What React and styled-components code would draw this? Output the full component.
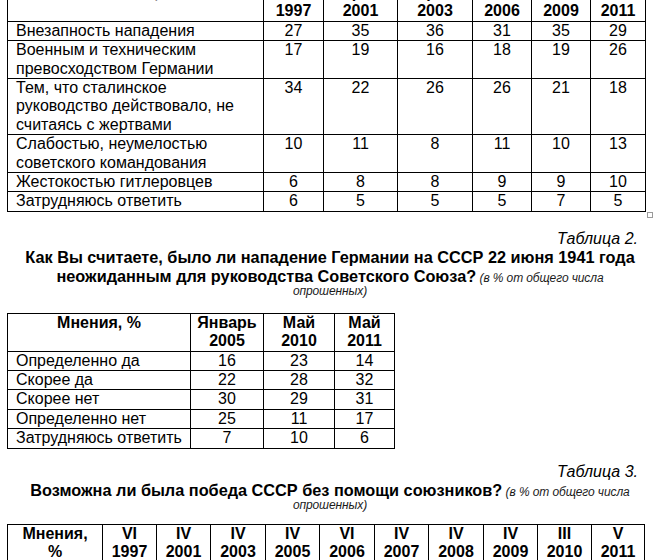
import React from 'react'
import styled, { createGlobalStyle } from 'styled-components'

const GlobalStyle = createGlobalStyle`
body {
  margin: 0;
  background: #fff;
  color: #000;
  font-family: "Liberation Sans", Arial, sans-serif;
  overflow: hidden;
}
`

const Page = styled.div`
padding: 0 6px 0 7px;
margin-top: -17px;
`

const TableWrap = styled.div`
position: relative;
width: fit-content;
margin-top: ${p => p.$gap || 0}px;
`

const Table = styled.table`
border-collapse: collapse;
table-layout: fixed;
width: ${p => p.$width}px;
font-size: 16px;
line-height: 18.4px;
`

const Col = styled.col`
width: ${p => p.$w}px;
`

const Th = styled.th`
border: 1px solid #000;
padding: 0 3px;
font-weight: bold;
text-align: center;
vertical-align: top;
white-space: pre-line;
`

const Td = styled.td`
border: 1px solid #000;
padding: ${p => (p.$label ? '0 2px 0 8px' : '0 3px')};
text-align: ${p => (p.$label ? 'left' : 'center')};
vertical-align: top;
`

// the little square Word draws at the table corner
const ResizeHandle = styled.span`
position: absolute;
right: -7px;
bottom: -6px;
width: 4px;
height: 4px;
border: 1px solid #9a9a9a;
background: #fff;
`

const Caption = styled.div`
margin-top: ${p => p.$gap}px;
padding-right: 15px;
text-align: right;
font-size: 16px;
line-height: 18.4px;
font-style: italic;
`

const Title = styled.div`
text-align: center;
font-size: 12px;
line-height: 12.6px;
`

const Question = styled.span`
font-size: 16.3px;
line-height: 18.4px;
font-weight: bold;
`

const Note = styled.span`
font-style: italic;
color: #1a1a1a;
letter-spacing: -0.1px;
`

const table1 = {
  cols: [256, 60, 74, 75, 59, 59, 55],
  head: ['Мнения, %', 'Июнь\n1997', 'Апрель\n2001', 'Апрель\n2003', 'Июнь\n2006', 'Июнь\n2009', 'Май\n2011'],
  rows: [
    ['Внезапность нападения', 27, 35, 36, 31, 35, 29],
    ['Военным и техническим превосходством Германии', 17, 19, 16, 18, 19, 26],
    ['Тем, что сталинское руководство действовало, не считаясь с жертвами', 34, 22, 26, 26, 21, 18],
    ['Слабостью, неумелостью советского командования', 10, 11, 8, 11, 10, 13],
    ['Жестокостью гитлеровцев', 6, 8, 8, 9, 9, 10],
    ['Затрудняюсь ответить', 6, 5, 5, 5, 7, 5],
  ],
}

const table2 = {
  cols: [183, 73, 71, 60],
  head: ['Мнения, %', 'Январь\n2005', 'Май\n2010', 'Май\n2011'],
  rows: [
    ['Определенно да', 16, 23, 14],
    ['Скорее да', 22, 28, 32],
    ['Скорее нет', 30, 29, 31],
    ['Определенно нет', 25, 11, 17],
    ['Затрудняюсь ответить', 7, 10, 6],
  ],
}

const table3 = {
  cols: [95, 54, 54, 55, 54, 55, 54, 55, 54, 54, 53],
  head: ['Мнения,\n%', 'VI\n1997', 'IV\n2001', 'IV\n2003', 'IV\n2005', 'VI\n2006', 'IV\n2007', 'IV\n2008', 'IV\n2009', 'III\n2010', 'V\n2011'],
  rows: [],
}

const DataTable = ({ data, gap, handle }) => {
  const width = data.cols.reduce((a, b) => a + b, 0)
  return (
    <TableWrap $gap={gap}>
      <Table $width={width}>
        <colgroup>
          {data.cols.map((w, i) => <Col key={i} $w={w} />)}
        </colgroup>
        <thead>
          <tr>
            {data.head.map((h, i) => <Th key={i}>{h}</Th>)}
          </tr>
        </thead>
        <tbody>
          {data.rows.map((row, r) => (
            <tr key={r}>
              {row.map((cell, c) => (
                <Td key={c} $label={c === 0}>{cell}</Td>
              ))}
            </tr>
          ))}
        </tbody>
      </Table>
      {handle && <ResizeHandle />}
    </TableWrap>
  )
}

const App = () => {
  return (
    <Page>
      <GlobalStyle />
      <DataTable data={table1} handle />

      <Caption $gap={18}>Таблица 2.</Caption>
      <Title>
        <Question>
          Как Вы считаете, было ли нападение Германии на СССР 22 июня 1941 года<br />
          неожиданным для руководства Советского Союза?
        </Question>{' '}
        <Note>(в % от общего числа<br />опрошенных)</Note>
      </Title>
      <DataTable data={table2} gap={15} />

      <Caption $gap={14}>Таблица 3.</Caption>
      <Title>
        <Question>Возможна ли была победа СССР без помощи союзников?</Question>{' '}
        <Note>(в % от общего числа<br />опрошенных)</Note>
      </Title>
      <DataTable data={table3} gap={12} />
    </Page>
  )
}

export default App
